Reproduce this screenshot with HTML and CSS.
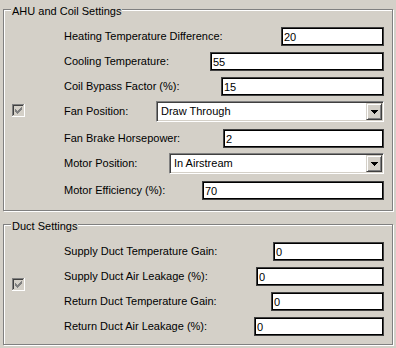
FILE: index.html
```html
<!DOCTYPE html>
<html>
<head>
<meta charset="utf-8">
<link rel="stylesheet" href="styles.css">
</head>
<body>
<fieldset class="group g1">
  <legend>AHU and Coil Settings</legend>
  <div class="gbody">
    <span class="check c1"><svg width="13" height="13" viewBox="0 0 13 13"><path fill="#808080" d="M0 0h12v1H0z M0 1h1v11H0z"/><path fill="#404040" d="M1 1h10v1H1z M1 2h1v9H1z"/><path fill="#ffffff" d="M12 0h1v13h-1z M0 12h12v1H0z"/><path fill="#d4d0c8" d="M2 2h9v9H2z"/><path fill="#808080" d="M3 5h1v3h-1z M4 6h1v3h-1z M5 7h1v3h-1z M6 6h1v3h-1z M7 5h1v3h-1z M8 4h1v3h-1z M9 3h1v3h-1z"/></svg></span>
    <div class="fields">
      <div class="row"><label>Heating Temperature Difference:</label><input class="field w103" value="20"></div>
      <div class="row"><label>Cooling Temperature:</label><input class="field w174" value="55"></div>
      <div class="row"><label>Coil Bypass Factor (%):</label><input class="field w163" value="15"></div>
      <div class="row sel"><label>Fan Position:</label><div class="combo w228"><span class="ctext">Draw Through</span><span class="cbtn"><svg width="7" height="4" viewBox="0 0 7 4"><path fill="#000" d="M0 0h7v1h-1v1h-1v1h-1v1h-1v-1h-1v-1h-1v-1h-1z"/></svg></span></div></div>
      <div class="row after-sel"><label>Fan Brake Horsepower:</label><input class="field w161" value="2"></div>
      <div class="row sel"><label>Motor Position:</label><div class="combo w215"><span class="ctext">In Airstream</span><span class="cbtn"><svg width="7" height="4" viewBox="0 0 7 4"><path fill="#000" d="M0 0h7v1h-1v1h-1v1h-1v1h-1v-1h-1v-1h-1v-1h-1z"/></svg></span></div></div>
      <div class="row after-sel"><label>Motor Efficiency (%):</label><input class="field w182" value="70"></div>
    </div>
  </div>
</fieldset>
<fieldset class="group g2">
  <legend>Duct Settings</legend>
  <div class="gbody">
    <span class="check c2"><svg width="13" height="13" viewBox="0 0 13 13"><path fill="#808080" d="M0 0h12v1H0z M0 1h1v11H0z"/><path fill="#404040" d="M1 1h10v1H1z M1 2h1v9H1z"/><path fill="#ffffff" d="M12 0h1v13h-1z M0 12h12v1H0z"/><path fill="#d4d0c8" d="M2 2h9v9H2z"/><path fill="#808080" d="M3 5h1v3h-1z M4 6h1v3h-1z M5 7h1v3h-1z M6 6h1v3h-1z M7 5h1v3h-1z M8 4h1v3h-1z M9 3h1v3h-1z"/></svg></span>
    <div class="fields">
      <div class="row"><label>Supply Duct Temperature Gain:</label><input class="field w111" value="0"></div>
      <div class="row"><label>Supply Duct Air Leakage (%):</label><input class="field w128" value="0"></div>
      <div class="row"><label>Return Duct Temperature Gain:</label><input class="field w113" value="0"></div>
      <div class="row"><label>Return Duct Air Leakage (%):</label><input class="field w130" value="0"></div>
    </div>
  </div>
</fieldset>
</body>
</html>
```
FILE: styles.css
```css
html, body {
  margin: 0;
  padding: 0;
  background: #d4d0c8;
}
body {
  font-family: "Liberation Sans", Arial, sans-serif;
  font-size: 11px;
  color: #000;
  width: 396px;
  height: 348px;
  overflow: hidden;
}
.group {
  margin: 0 3px;
  padding: 8px 8px 10px;
  border: 1px solid #808080;
  box-shadow: inset 1px 1px 0 #fff, 1px 1px 0 #fff;
  min-width: 0;
}
.g2 {
  margin-top: 4px;
  padding-bottom: 8px;
}
.group legend {
  font: 11px/13px "Liberation Sans", Arial, sans-serif;
  padding: 5px 1px 1px;
  margin-left: -1px;
  background: #d4d0c8;
}
.gbody {
  display: flex;
  align-items: flex-start;
}
.check {
  display: block;
  width: 13px;
  height: 13px;
  align-self: center;
}
.check svg { display: block; }
.c1 { margin-bottom: 6px; }
.c2 { margin-bottom: 9px; }
.fields {
  flex: 1;
  margin-left: 39px;
  display: flex;
  flex-direction: column;
}
.row {
  display: flex;
  align-items: center;
  height: 19px;
}
.row + .row { margin-top: 6px; }
.row.sel { height: 21px; margin-top: 5px; }
.row.after-sel { margin-top: 7px; }
.row label {
  white-space: nowrap;
  line-height: 13px;
}
.field {
  margin: 0 0 0 auto;
  height: 19px;
  box-sizing: border-box;
  border: 1px solid #404040;
  box-shadow: inset 0 0 0 1px #000;
  background: #fff;
  padding: 0 2px;
  font: 11px "Liberation Sans", Arial, sans-serif;
  color: #000;
  outline: none;
}
.combo {
  margin-left: auto;
  display: flex;
  height: 21px;
  box-sizing: border-box;
  border: 1px solid;
  border-color: #808080 #fff #fff #808080;
  box-shadow: inset 1px 1px 0 #404040, inset -1px -1px 0 #d4d0c8;
  background: #fff;
  padding: 1px;
}
.ctext {
  flex: 1;
  padding-left: 3px;
  line-height: 17px;
  white-space: nowrap;
}
.cbtn {
  width: 16px;
  height: 17px;
  box-sizing: border-box;
  border: 1px solid;
  border-color: #d4d0c8 #404040 #404040 #d4d0c8;
  box-shadow: inset 1px 1px 0 #fff, inset -1px -1px 0 #808080;
  background: #d4d0c8;
  display: flex;
  align-items: center;
  justify-content: center;
}
.cbtn svg { display: block; }
.w103 { width: 103px; }
.w174 { width: 174px; }
.w163 { width: 163px; }
.w228 { width: 228px; }
.w161 { width: 161px; }
.w215 { width: 215px; }
.w182 { width: 182px; }
.w111 { width: 111px; }
.w128 { width: 128px; }
.w113 { width: 113px; }
.w130 { width: 130px; }
```
